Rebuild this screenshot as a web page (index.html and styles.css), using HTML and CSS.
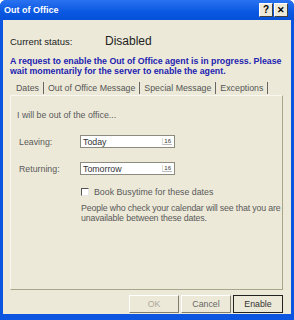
FILE: index.html
```html
<!DOCTYPE html>
<html lang="en">
<head>
  <meta charset="UTF-8" />
  <title>Out of Office</title>
  <link rel="stylesheet" href="styles.css">
</head>
<body>
  <div class="window">
    <div class="titlebar">
      <span class="title">Out of Office</span>
      <div class="title-buttons">
        <span class="tb-btn">?</span>
        <span class="tb-btn close">&#x2715;</span>
      </div>
    </div>

    <div class="content">
      <div class="status">
        <span class="status-label">Current status:</span>
        <span class="status-value">Disabled</span>
      </div>

      <p class="notice">A request to enable the Out of Office agent is in progress. Please wait momentarily for the server to enable the agent.</p>

      <div class="tabs">
        <span class="tab">Dates</span>
        <span class="tab">Out of Office Message</span>
        <span class="tab">Special Message</span>
        <span class="tab">Exceptions</span>
      </div>

      <div class="panel">
        <p class="intro">I will be out of the office...</p>

        <div class="field">
          <label>Leaving:</label>
          <div class="date-box"><span>Today</span><span class="cal">16</span></div>
        </div>
        <div class="field">
          <label>Returning:</label>
          <div class="date-box"><span>Tomorrow</span><span class="cal">16</span></div>
        </div>

        <div class="check-row">
          <span class="checkbox"></span>
          <span>Book Busytime for these dates</span>
        </div>
        <p class="hint">People who check your calendar will see that you are unavailable between these dates.</p>
      </div>

      <div class="actions">
        <button class="disabled">OK</button>
        <button class="cancel">Cancel</button>
        <button class="default">Enable</button>
      </div>
    </div>
  </div>
</body>
</html>
```

FILE: styles.css
```css
body {
  margin: 0;
  padding: 0;
  font-family: "Liberation Sans", Arial, sans-serif;
  background: #fff;
}

.window {
  width: 294px;
  height: 320px;
  box-sizing: border-box;
  background: #0c55e0;
  padding: 0 3px 6px 3px;
  display: flex;
  flex-direction: column;
  border-radius: 6px 6px 0 0;
}

.titlebar {
  height: 20px;
  display: flex;
  align-items: center;
  justify-content: space-between;
  background: linear-gradient(#2a72f0, #0a58e2 60%, #0650d8);
  margin: 0 -3px;
  padding: 0 3px 0 4px;
  border-radius: 6px 6px 0 0;
}

.title {
  color: #fff;
  font-weight: bold;
  font-size: 9px;
}

.title-buttons {
  display: flex;
  gap: 1px;
  margin-right: 3px;
}

.tb-btn {
  width: 12px;
  height: 12px;
  background: #ece9d8;
  border: 1px solid;
  border-color: #fff #404040 #404040 #fff;
  font-size: 10px;
  font-weight: bold;
  color: #000;
  display: flex;
  align-items: center;
  justify-content: center;
  line-height: 1;
}

.tb-btn.close {
  font-size: 9px;
}

.content {
  flex: 1;
  background: #ece9d8;
  padding: 0 8px 0 7px;
  display: flex;
  flex-direction: column;
}

.status {
  display: flex;
  align-items: baseline;
  margin-top: 14px;
  height: 12px;
}

.status-label {
  font-size: 9.5px;
  color: #222;
  width: 95px;
}

.status-value {
  font-size: 12px;
  color: #222;
}

.notice {
  margin: 10px 0 0 0;
  font-size: 8.8px;
  font-weight: bold;
  color: #2323b0;
  line-height: 10px;
}

.tabs {
  display: flex;
  height: 15px;
  margin-top: 4px;
  padding-left: 2px;
  align-items: center;
}

.tab {
  font-size: 8.8px;
  color: #555;
  padding: 0 4px;
  border-right: 1px solid #666;
  height: 12px;
  line-height: 12px;
}

.panel {
  height: 195px;
  box-sizing: border-box;
  border: 1px solid;
  border-color: #f8f7f0 #a8a68a #a8a68a #f8f7f0;
  padding: 14px 0 0 6px;
  font-size: 8.8px;
  color: #5a5a5a;
}

.intro {
  margin: 0 0 15px 0;
}

.field {
  display: flex;
  align-items: center;
  height: 13px;
  margin-bottom: 14px;
}

.field label {
  width: 61px;
  padding-left: 2px;
}

.date-box {
  width: 95px;
  height: 13px;
  box-sizing: border-box;
  background: #fff;
  border: 1px solid #8b8b80;
  display: flex;
  align-items: center;
  justify-content: space-between;
  padding: 0 2px;
  color: #333;
}

.cal {
  font-size: 6px;
  color: #333;
  border-left: 1px solid #ddd;
  border-bottom: 1px solid #bbb;
  padding: 0 1px;
}

.check-row {
  display: flex;
  align-items: center;
  gap: 5px;
  margin: -2px 0 0 64px;
}

.checkbox {
  width: 8px;
  height: 8px;
  box-sizing: border-box;
  background: #fff;
  border: 1px solid;
  border-color: #555 #e8e8e8 #e8e8e8 #555;
}

.hint {
  margin: 6px 0 0 64px;
  line-height: 10px;
  letter-spacing: -0.15px;
}

.actions {
  display: flex;
  justify-content: flex-end;
  gap: 2px;
  margin-top: 5px;
}

.actions button {
  width: 50px;
  height: 18px;
  font-family: "Liberation Sans", Arial, sans-serif;
  font-size: 8.8px;
  background: #ece9d8;
  border: 1px solid;
  border-color: #fff #7f7d6e #7f7d6e #fff;
  padding: 0;
}

.actions .disabled {
  color: #aca899;
}

.actions .cancel {
  color: #666;
}

.actions .default {
  color: #333;
  border-color: #222;
}
```
